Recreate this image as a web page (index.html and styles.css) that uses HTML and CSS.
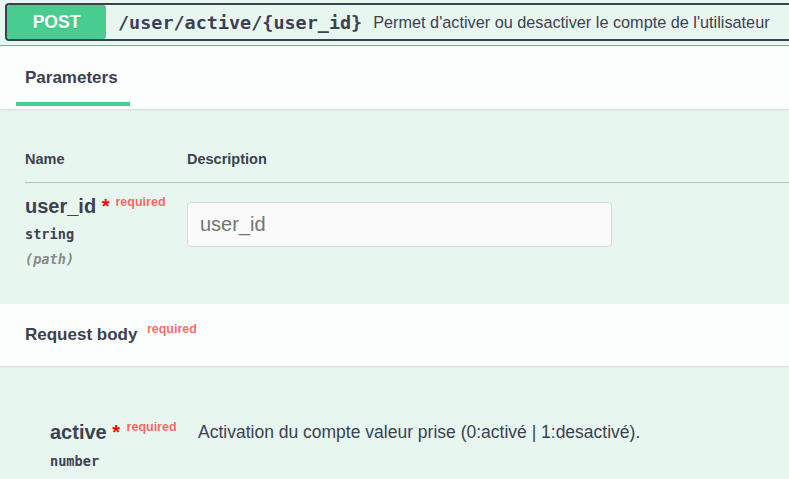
FILE: index.html
```html
<!DOCTYPE html>
<html lang="fr">
<head>
<meta charset="utf-8">
<title>POST /user/active/{user_id}</title>
<link rel="stylesheet" href="styles.css">
</head>
<body>
<div class="opblock">
  <div class="summary">
    <span class="method">POST</span>
    <span class="path">/user/active/{user_id}</span>
    <span class="summary-desc">Permet d'activer ou desactiver le compte de l'utilisateur</span>
  </div>
  <div class="opblock-body">
    <div class="section-header tabs">
      <div class="tab"><h4 class="tab-title">Parameters</h4></div>
    </div>
    <div class="table-container">
      <div class="params-head">
        <div class="col-name">Name</div>
        <div class="col-desc">Description</div>
      </div>
      <div class="params-row">
        <div class="col-name">
          <div class="param-name">user_id&nbsp;<span class="star">*</span><span class="req req-param">required</span></div>
          <div class="param-type">string</div>
          <div class="param-in">(path)</div>
        </div>
        <div class="col-desc">
          <input class="param-input" type="text" placeholder="user_id">
        </div>
      </div>
    </div>
    <div class="section-header request-body">
      <h4 class="rb-title">Request body<span class="req req-body">required</span></h4>
    </div>
    <div class="model">
      <div class="model-row">
        <div class="model-name">
          <div class="prop-name">active&nbsp;<span class="star">*</span><span class="req req-prop">required</span></div>
          <div class="prop-type">number</div>
        </div>
        <div class="model-desc">Activation du compte valeur prise (0:activé | 1:desactivé).</div>
      </div>
    </div>
  </div>
</div>
</body>
</html>
```
FILE: styles.css
```css
html, body {
  margin: 0;
  padding: 0;
}
body {
  background: #e8f6f0;
  font-family: "Liberation Sans", Arial, sans-serif;
  color: #3b4151;
  overflow: hidden;
  height: 479px;
}

/* ---------- summary bar ---------- */
.summary {
  margin: 3px -20px 0 5px;
  height: 34px;
  border: 2px solid #3b4151;
  border-right: none;
  border-radius: 4px 0 0 4px;
  display: flex;
  align-items: center;
  background: #e8f6f0;
  white-space: nowrap;
}
.method {
  flex: none;
  width: 99px;
  height: 34px;
  background: #49cc90;
  border-radius: 3px;
  color: #fff;
  font-weight: bold;
  font-size: 17.5px;
  display: flex;
  align-items: center;
  justify-content: center;
  text-shadow: 0 1px 0 rgba(0, 0, 0, .1);
}
.path {
  font-family: "DejaVu Sans Mono", monospace;
  font-weight: bold;
  font-size: 18.45px;
  color: #3b4151;
  padding: 0 11px 0 12px;
}
.summary-desc {
  font-size: 16.25px;
  color: #3b4151;
}

/* ---------- body ---------- */
.opblock-body {
  margin-top: 4px;
  border-top: 1px solid #49cc90;
}
.section-header {
  background: #fbfefd;
  box-shadow: 0 1px 2px rgba(0, 0, 0, .1);
  position: relative;
}
.tabs {
  display: flex;
  padding: 22px 0 3px 16px;
}
.tab {
  display: flex;
  flex-direction: column;
  padding: 0 12px 0 9px;
  position: relative;
}
.tab::after {
  content: "";
  display: block;
  height: 4px;
  margin: 14px -12px 0 -9px;
  background: #49cc90;
}
.tab-title {
  margin: 0;
  font-size: 17px;
  line-height: 20px;
  font-weight: bold;
}

/* ---------- parameters table ---------- */
.table-container {
  padding: 41px 0 25px 25px;
}
.params-head {
  display: flex;
  font-size: 14.5px;
  line-height: 18px;
  font-weight: bold;
  padding-bottom: 14px;
  border-bottom: 1px solid rgba(59, 65, 81, .3);
}
.col-name {
  flex: none;
  width: 162px;
}
.col-desc {
  flex: 1;
}
.params-row {
  display: flex;
  padding: 12px 0;
}
.param-name, .prop-name {
  font-size: 20px;
  line-height: 23px;
  font-weight: bold;
  white-space: nowrap;
}
.star {
  color: #ff0000;
}
.req {
  color: rgba(255, 0, 0, .6);
  font-size: 12.5px;
  font-weight: bold;
  position: relative;
  padding-left: 6px;
}
.req-param { top: -7px; }
.req-prop { top: -8px; padding-left: 6.5px; }
.req-body { top: -7.5px; padding-left: 9.5px; }

.param-type, .prop-type {
  font-family: "DejaVu Sans Mono", monospace;
  font-weight: bold;
  font-size: 13.6px;
  line-height: 16px;
  margin-top: 5px;
  color: #3b4151;
}
.prop-type {
  margin-top: 6px;
}
.param-in {
  font-family: "DejaVu Sans Mono", monospace;
  font-weight: bold;
  font-style: italic;
  font-size: 13.6px;
  line-height: 16px;
  margin-top: 9px;
  color: #8a8a8a;
}
.param-input {
  display: block;
  box-sizing: border-box;
  width: 425px;
  height: 45px;
  margin: 7px 0 0;
  padding: 10px 12px;
  border: 1px solid #d9d9d9;
  border-radius: 4px;
  background: #fafafa;
  font-family: "Liberation Sans", Arial, sans-serif;
  font-size: 20px;
  color: #3b4151;
  outline: none;
}
.param-input::placeholder {
  color: #757575;
}

/* ---------- request body ---------- */
.request-body {
  padding: 21px 25px 20px;
}
.rb-title {
  margin: 0;
  font-size: 17px;
  line-height: 20px;
  font-weight: bold;
}

.model {
  padding: 55px 0 0 50px;
}
.model-row {
  display: flex;
  align-items: flex-start;
}
.model-name {
  flex: none;
  width: 148px;
}
.model-desc {
  font-size: 17.5px;
  line-height: 20px;
  padding-top: 1px;
  color: #3b4151;
}
```
